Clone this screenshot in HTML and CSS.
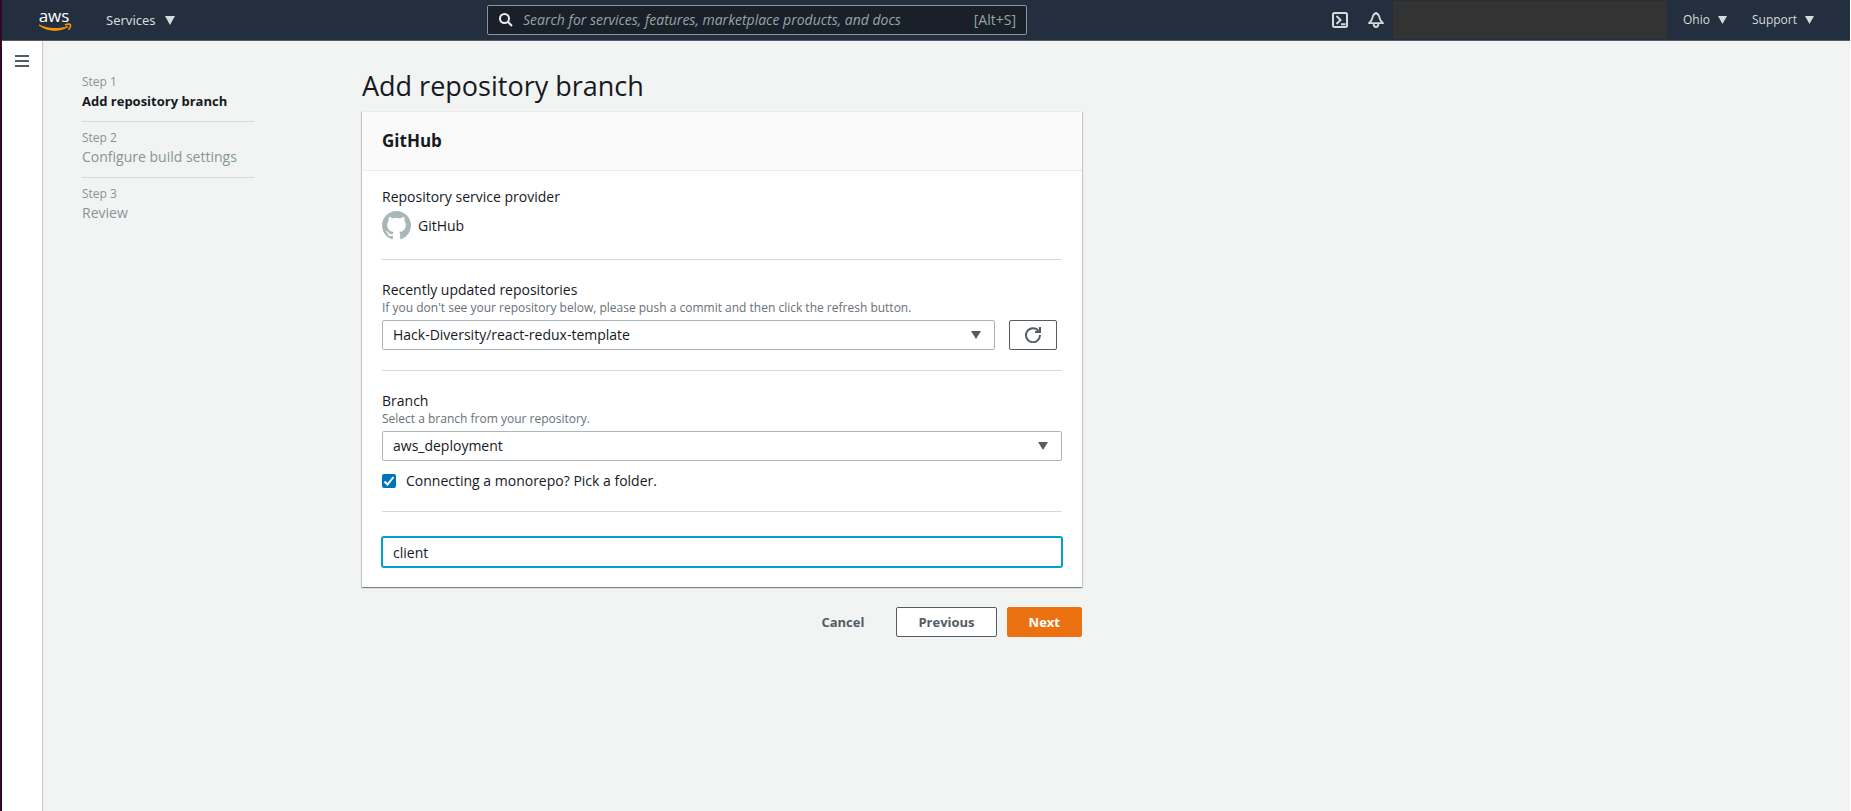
FILE: index.html
```html
<!DOCTYPE html>
<html lang="en">
<head>
<meta charset="utf-8">
<title>Add repository branch</title>
<link rel="stylesheet" href="styles.css">
</head>
<body>
<header class="topbar">
  <a class="logo" href="#" aria-label="AWS home">
    <svg width="34" height="32" viewBox="0 0 34 32">
      <text class="logo-text" x="16" y="18" text-anchor="middle">aws</text>
      <path d="M1 21C9 27.500 22 28 30 22.500C22 25.500 10 25.500 1 21Z" fill="#ff9900" stroke="#ff9900" stroke-width="1"/>
      <path d="M27 21C29.500 20 32 20 32.500 20.800C32.800 22 31.800 24.300 30.500 25.800" fill="none" stroke="#ff9900" stroke-width="1.400"/>
    </svg>
  </a>
  <button class="nav-item services" type="button">Services <svg width="10" height="9" viewBox="0 0 10 9"><path d="M0 0H10L5 9Z" fill="currentColor"/></svg></button>
  <label class="search">
    <svg width="14" height="14" viewBox="0 0 14 14" fill="none" stroke="#eaeded" stroke-width="2"><circle cx="5.500" cy="5.500" r="4.500"/><path d="M8.800 8.800L13 13"/></svg>
    <input type="search" aria-label="Search" placeholder="Search for services, features, marketplace products, and docs">
    <span>[Alt+S]</span>
  </label>
  <nav class="tools">
    <button class="icon-button" type="button" aria-label="CloudShell">
      <svg width="16" height="16" viewBox="0 0 16 16" fill="none" stroke="#d5dbdb" stroke-width="2"><rect x="1" y="1" width="14" height="14" rx="1.500"/><path d="M4.500 4L8.500 8L4.500 12M9 12.200H13.500"/></svg>
    </button>
    <button class="icon-button" type="button" aria-label="Notifications">
      <svg width="16" height="16" viewBox="0 0 16 16" fill="none" stroke="#d5dbdb" stroke-width="1.800" stroke-linejoin="round"><path d="M8 1.500C5.800 1.500 4.900 3.500 4.400 6C4 8.300 2.600 9.800 1 11.200H15C13.400 9.800 12 8.300 11.600 6C11.100 3.500 10.200 1.500 8 1.500ZM5.700 12C5.700 16 10.300 16 10.300 12M8 0V2"/></svg>
    </button>
    <div class="account"></div>
    <button class="nav-item small" type="button">Ohio <svg width="9" height="8" viewBox="0 0 9 8"><path d="M0 0H9L4.500 8Z" fill="currentColor"/></svg></button>
    <button class="nav-item small" type="button">Support <svg width="9" height="8" viewBox="0 0 9 8"><path d="M0 0H9L4.500 8Z" fill="currentColor"/></svg></button>
  </nav>
</header>
<div class="shell">
  <aside class="rail">
    <button class="menu" type="button" aria-label="Open menu"><svg width="14" height="12" viewBox="0 0 14 12"><path d="M0 1H14M0 6H14M0 11H14" stroke="#545b64" stroke-width="2"/></svg></button>
  </aside>
  <main class="page">
    <ol class="steps">
      <li class="step current"><small>Step 1</small><span>Add repository branch</span></li>
      <li class="step"><small>Step 2</small><span>Configure build settings</span></li>
      <li class="step"><small>Step 3</small><span>Review</span></li>
    </ol>
    <form class="wizard">
      <h1>Add repository branch</h1>
      <section class="card">
        <h2>GitHub</h2>
        <div class="card-body">
          <div class="group provider">
            <div class="label">Repository service provider</div>
            <div class="provider-name">
              <svg width="29" height="29" viewBox="0 0 16 16" fill="#aab7b8"><path d="M8 0C3.580 0 0 3.580 0 8c0 3.540 2.290 6.530 5.470 7.590.4.070.55-.17.55-.38 0-.19-.01-.82-.01-1.490-2.010.37-2.530-.49-2.690-.94-.09-.23-.48-.94-.82-1.130-.28-.15-.68-.52-.01-.53.63-.01 1.080.58 1.230.82.72 1.210 1.870.87 2.330.66.070-.52.28-.87.51-1.070-1.780-.2-3.640-.89-3.640-3.950 0-.87.31-1.590.82-2.150-.08-.2-.36-1.020.08-2.120 0 0 .67-.21 2.200.82.64-.18 1.320-.27 2-.27s1.360.09 2 .27c1.530-1.040 2.200-.82 2.200-.82.44 1.100.16 1.920.08 2.120.51.56.82 1.270.82 2.150 0 3.070-1.870 3.750-3.650 3.950.29.25.54.73.54 1.480 0 1.070-.01 1.930-.01 2.200 0 .21.15.46.55.38A8.010 8.010 0 0 0 16 8c0-4.420-3.580-8-8-8Z"/></svg>
              <span>GitHub</span>
            </div>
          </div>
          <div class="group repository">
            <label class="label" for="repository">Recently updated repositories</label>
            <p>If you don't see your repository below, please push a commit and then click the refresh button.</p>
            <div class="control-row">
              <div class="select-box">
                <select id="repository"><option>Hack-Diversity/react-redux-template</option></select>
                <svg width="10" height="8" viewBox="0 0 10 8"><path d="M0 0H10L5 8Z" fill="#545b64"/></svg>
              </div>
              <button class="refresh" type="button" aria-label="Refresh"><svg width="16" height="16" viewBox="0 0 16 16" fill="none" stroke="#545b64" stroke-width="2"><path d="M13.500 3.800A7 7 0 1 0 15 8M15 0V5H10"/></svg></button>
            </div>
          </div>
          <div class="group branch">
            <label class="label" for="branch">Branch</label>
            <p>Select a branch from your repository.</p>
            <div class="select-box">
              <select id="branch"><option>aws_deployment</option></select>
              <svg width="10" height="8" viewBox="0 0 10 8"><path d="M0 0H10L5 8Z" fill="#545b64"/></svg>
            </div>
            <div class="check">
              <span class="tick"><input id="monorepo" type="checkbox" checked><svg width="14" height="14" viewBox="0 0 14 14"><path d="M2.500 7.500L5.500 10.500L11.500 3" fill="none" stroke="#fff" stroke-width="2"/></svg></span>
              <label for="monorepo">Connecting a monorepo? Pick a folder.</label>
            </div>
          </div>
          <input class="folder" type="text" aria-label="Folder" value="client">
        </div>
      </section>
      <div class="actions">
        <button class="button link" type="button">Cancel</button>
        <button class="button" type="button">Previous</button>
        <button class="button primary" type="button">Next</button>
      </div>
    </form>
  </main>
</div>
</body>
</html>
```
FILE: styles.css
```css
* {
  box-sizing: border-box;
}

body {
  margin: 0;
  min-height: 100vh;
  display: flex;
  flex-direction: column;
  border-left: 2px solid #300a24;
  border-right: 1px solid #fff;
  background: #f2f3f3;
  color: #16191f;
  font: 14px/20px "Open Sans", "Noto Sans", sans-serif;
}

button,
input,
select {
  margin: 0;
  font: inherit;
  color: inherit;
}

button {
  padding: 0;
  border: 0;
  background: none;
}

svg {
  display: block;
  flex: none;
}

.topbar {
  display: flex;
  align-items: center;
  height: 41px;
  padding: 0 36px;
  border-bottom: 1px solid #545b64;
  background: #232f3e;
  color: #d5dbdb;
}

.logo {
  width: 68px;
}

.logo svg {
  overflow: visible;
}

.logo-text {
  font-size: 17px;
  font-weight: 500;
  fill: #fff;
}

.nav-item {
  display: flex;
  align-items: center;
  gap: 8px;
}

.services {
  width: 381px;
  gap: 9px;
  font-family: "Noto Sans", sans-serif;
  font-size: 13px;
}

.small {
  font-size: 12px;
}

.search {
  display: flex;
  align-items: center;
  flex: 0 1 540px;
  height: 30px;
  padding: 0 10px 0 11px;
  border: 1px solid #879596;
  border-radius: 2px;
  background: #1a2029;
  color: #95a5a6;
}

.search input {
  flex: 1;
  min-width: 0;
  margin-left: 10px;
  padding: 0;
  border: 0;
  outline: 0;
  background: none;
}

.search input::placeholder {
  color: #95a5a6;
  font-style: italic;
}

.tools {
  display: flex;
  align-items: center;
  margin-left: auto;
}

.icon-button {
  margin-right: 20px;
}

.icon-button + .icon-button {
  margin-right: 9px;
}

.account {
  width: 274px;
  height: 38px;
  background: #333;
}

.small {
  margin-left: 16px;
}

.small + .small {
  margin-left: 25px;
}

.shell {
  display: flex;
  flex: 1;
}

.rail {
  flex: none;
  width: 41px;
  padding: 14px 13px;
  border-right: 1px solid #c4c8c8;
  background: #fff;
}

.menu {
  display: block;
}

.page {
  display: flex;
  flex: 1;
  gap: 108px;
  padding: 29px 39px;
}

.steps {
  flex: none;
  width: 172px;
  margin: 0;
  padding: 0;
  list-style: none;
}

.step {
  display: flex;
  flex-direction: column;
  height: 56px;
  padding-top: 6px;
  border-bottom: 1px solid #d5dbdb;
  color: #879596;
}

.step:first-child {
  height: 52px;
  padding-top: 2px;
}

.step:last-child {
  border: 0;
}

.step small {
  font-size: 12px;
  line-height: 20px;
}

.step span {
  line-height: 18px;
}

.current span {
  color: #16191f;
  font-size: 13px;
  font-weight: 700;
}

.wizard {
  flex: 0 1 720px;
}

h1 {
  margin: 0;
  font-size: 27px;
  font-weight: 400;
  line-height: 32px;
}

.card {
  margin-top: 9px;
  background: #fff;
  box-shadow: 0 1px 1px 0 rgba(0, 28, 36, 0.3), 1px 1px 1px 0 rgba(0, 28, 36, 0.15), -1px 1px 1px 0 rgba(0, 28, 36, 0.15);
}

h2 {
  margin: 0;
  padding: 18px 20px;
  border-top: 1px solid #eaeded;
  border-bottom: 1px solid #eaeded;
  background: #fafafa;
  font-size: 17px;
  line-height: 22px;
}

.card-body {
  padding: 16px 20px 20px;
}

.group {
  border-bottom: 1px solid #d5dbdb;
}

.provider {
  padding-bottom: 19px;
}

.provider-name {
  display: flex;
  align-items: center;
  gap: 7px;
  margin-top: 4px;
}

.repository,
.branch {
  padding: 20px 0;
}

.label {
  display: block;
}

p {
  margin: 0 0 4px;
  color: #687078;
  font-size: 12px;
  line-height: 16px;
}

.control-row {
  display: flex;
  gap: 14px;
  padding-right: 5px;
}

.select-box {
  display: grid;
  flex: 1;
  align-items: center;
}

.select-box > * {
  grid-area: 1 / 1;
}

.select-box svg {
  justify-self: end;
  margin-right: 14px;
  pointer-events: none;
}

select {
  width: 100%;
  height: 30px;
  padding: 0 30px 0 10px;
  border: 1px solid #aab7b8;
  border-radius: 2px;
  appearance: none;
  background: #fff;
}

.refresh {
  display: grid;
  place-items: center;
  width: 48px;
  height: 30px;
  border: 1px solid #545b64;
  border-radius: 2px;
}

.check {
  display: flex;
  align-items: center;
  gap: 10px;
  margin-top: 10px;
}

.tick {
  display: grid;
}

.tick > * {
  grid-area: 1 / 1;
  pointer-events: none;
}

.tick input {
  width: 14px;
  height: 14px;
  border-radius: 2px;
  appearance: none;
  background: #0073bb;
  pointer-events: auto;
}

.folder {
  display: block;
  width: 100%;
  height: 30px;
  margin-top: 25px;
  padding: 0 10px;
  border: 1px solid #00a1c9;
  border-radius: 2px;
  outline: 0;
  box-shadow: 0 0 0 1px #00a1c9;
}

.actions {
  display: flex;
  justify-content: flex-end;
  gap: 10px;
  margin-top: 20px;
}

.button {
  height: 30px;
  padding: 0 21px;
  border: 1px solid #545b64;
  border-radius: 2px;
  background: #fff;
  color: #545b64;
  font-size: 13px;
  font-weight: 700;
}

.link {
  border-color: transparent;
  background: none;
}

.primary {
  border-color: #ec7211;
  background: #ec7211;
  color: #fff;
}
```
